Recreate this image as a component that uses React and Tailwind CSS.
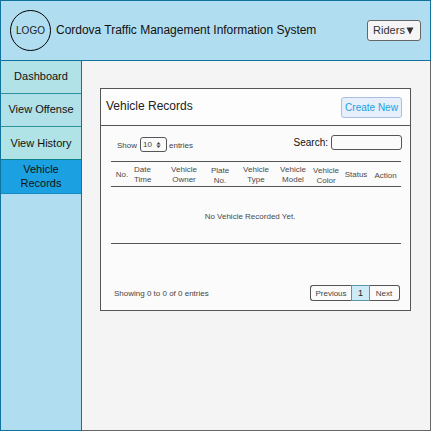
const navItems = [
  { label: 'Dashboard', style: 'h-[33px] bg-[#b0e2e8] border-[#2e929e] pb-[2px]' },
  { label: 'View Offense', style: 'h-[33px] bg-[#b0e0e8] border-[#2e929e] pb-[2px]' },
  { label: 'View History', style: 'h-[33px] bg-[#b0e3e6] border-[#0e8088]' },
  { label: 'Vehicle Records', style: 'h-[34px] bg-[#1ba1e2] border-[#1889c6] px-4 pb-px' },
];

const columns = [
  { label: 'No.', style: 'w-[22px] text-center pt-[8px]' },
  { label: 'Date Time', style: 'w-[32px] pl-px pr-2 pt-[3px]' },
  { label: 'Vehicle Owner', style: 'w-[38px] px-[5px] text-center pt-[3px]' },
  { label: 'Plate No.', style: 'w-[34px] px-1 text-center pt-[4px]' },
  { label: 'Vehicle Type', style: 'w-[38px] px-[5px] text-center pt-[3px]' },
  { label: 'Vehicle Model', style: 'w-[36px] px-1 text-center pt-[3px]' },
  { label: 'Vehicle Color', style: 'w-[30px] text-center pt-[4px]' },
  { label: 'Status', style: 'w-[30px] text-center pt-[8px]' },
  { label: 'Action', style: 'w-[29px] text-center pt-[9px]' },
];

function Header() {
  return (
    <header className="flex h-[61px] items-center border border-[#10739e] bg-[#b1ddf0] px-[9px]">
      <div className="flex h-[41px] w-[41px] shrink-0 items-center justify-center rounded-full border border-black text-[10px] text-[#222]">
        LOGO
      </div>
      <h1 className="-mt-px ml-[5px] whitespace-nowrap pb-px text-[12px] leading-[14px] tracking-[-0.02px] text-[#111]">
        Cordova Traffic Management Information System
      </h1>
      <button className="ml-auto flex h-[21px] w-[54px] items-center justify-center rounded-[3px] border border-[#666] bg-[#f5f5f5] pr-px text-[11px] text-[#333]">
        Riders
        <svg className="ml-px" width="8" height="8" viewBox="0 0 8 8">
          <path d="M0.5 0.5h7L4 7.5z" fill="#333" />
        </svg>
      </button>
    </header>
  );
}

function Sidebar() {
  return (
    <nav className="w-[82px] border-x border-b border-[#10739e] bg-[#b1ddf0]">
      {navItems.map((item) => (
        <a
          key={item.label}
          className={`flex items-center justify-center border-b text-center text-[11px] leading-[14px] text-[#111] ${item.style}`}
        >
          {item.label}
        </a>
      ))}
    </nav>
  );
}

function Records() {
  return (
    <section className="ml-[18px] mt-[27px] h-[223px] w-[311px] border border-[#555] bg-[#fbfbfb]">
      <div className="flex h-[37px] items-center justify-between border-b border-[#555] bg-[#fdfdfd] pl-[5px] pr-[8px]">
        <h2 className="pb-[2px] text-[12px] text-[#222]">Vehicle Records</h2>
        <button className="h-[21px] w-[61px] whitespace-nowrap rounded-[3px] border border-[#a9bfdf] bg-[#e6effb] text-[10px] leading-[19px] text-[#1ba1e2]">
          Create New
        </button>
      </div>
      <div className="flex h-[35px] justify-between pl-4 pr-[8px] text-[8px] text-[#444]">
        <div className="mt-[11px] flex h-[15px] items-center">
          <span className="w-[23px] whitespace-nowrap pt-[2px]">Show</span>
          <span className="flex h-[15px] w-[27px] items-center justify-between rounded-[3px] border border-[#555] pl-[2px] pr-[5px]">
            10
            <svg width="5" height="6" viewBox="0 0 6 7">
              <path d="M3 0L5.5 3h-5zM3 7L0.5 4h5z" fill="#444" />
            </svg>
          </span>
          <span className="ml-[2px] pt-[2px]">entries</span>
        </div>
        <div className="mt-[9px] flex h-[15px] items-center text-[10px] text-[#111]">
          <span className="pb-px">Search:</span>
          <span className="ml-[3px] h-[15px] w-[71px] rounded-[3px] border border-[#555]" />
        </div>
      </div>
      <div className="ml-[10px] w-[290px] text-[8px] text-[#4a4a4a]">
        <div className="flex h-[26px] border-y border-[#555] leading-[10px]">
          {columns.map((column) => (
            <span key={column.label} className={`shrink-0 ${column.style}`}>
              {column.label}
            </span>
          ))}
        </div>
        <div className="flex h-[57px] items-center justify-center border-b border-[#555] pr-[12px] pt-[3px]">
          No Vehicle Recorded Yet.
        </div>
      </div>
      <div className="mt-[41px] flex h-[16px] items-center justify-between pl-[13px] pr-[10px] text-[8px] text-[#444]">
        <span className="pt-[2px]">Showing 0 to 0 of 0 entries</span>
        <div className="flex h-[16px] text-center leading-[15px]">
          <span className="w-[41px] rounded-l-[3px] border border-r-0 border-[#555]">Previous</span>
          <span className="w-[19px] border border-[#5b96ad] bg-[#cdebf7] text-[9px] text-[#222]">1</span>
          <span className="w-[30px] rounded-r-[3px] border border-l-0 border-[#555] pr-px">Next</span>
        </div>
      </div>
    </section>
  );
}

export default function App() {
  return (
    <div className="flex h-[431px] w-[431px] flex-col overflow-hidden bg-[#f4f4f4] font-['Liberation_Sans',Arial,sans-serif]">
      <Header />
      <div className="flex flex-1">
        <Sidebar />
        <main className="flex-1 border-b border-r border-[#666]">
          <Records />
        </main>
      </div>
    </div>
  );
}
